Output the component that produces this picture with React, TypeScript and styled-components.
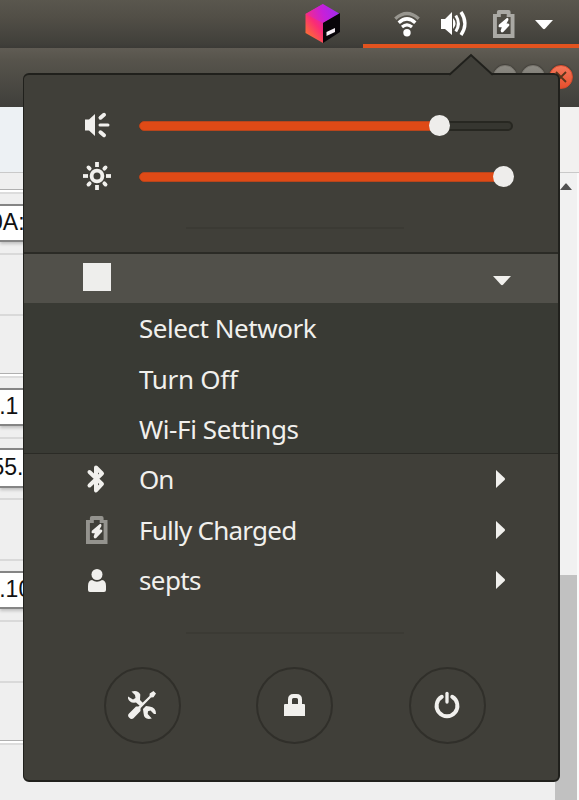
import React from "react";
import styled, { createGlobalStyle } from "styled-components";

const GlobalStyle = createGlobalStyle`
  * { box-sizing: border-box; }
  body { margin: 0; background: #efefef; overflow: hidden; }
  svg { display: block; flex: none; overflow: visible; }
`;

const Screen = styled.div`
  position: relative;
  width: 579px;
  height: 800px;
  overflow: hidden;
  display: grid;
  grid-template-rows: 48px 59px 1fr;
  background: #efefef;
`;

const TopBar = styled.header`
  display: flex;
  justify-content: flex-end;
  background: linear-gradient(#5a574e 0, #514e46 38%, #403f3a 92%, #3b3a36 100%);
`;

const AppIndicator = styled.div`
  width: 60px;
  padding: 4px 0 0 2px;
`;

const SystemTray = styled.div`
  width: 216px;
  display: grid;
  grid-template-columns: 31px 47px 52px 42px 1fr;
  border-bottom: 4px solid #e2531f;
`;

const TraySlot = styled.div<{ $col: number; $top: number }>`
  grid-column: ${(p) => p.$col};
  padding-top: ${(p) => p.$top}px;
`;

const TitleBar = styled.div`
  display: flex;
  justify-content: flex-end;
  gap: 4px;
  padding: 17px 6px 0 0;
  background: linear-gradient(#605c54 0, #57544c 20%, #45443f 80%, #403f3b 100%);
`;

const WindowButton = styled.div<{ $close?: boolean }>`
  width: 24px;
  height: 24px;
  border-radius: 50%;
  display: flex;
  align-items: center;
  justify-content: center;
  border: 1px solid ${(p) => (p.$close ? "#d84a2b" : "#77746d")};
  background: ${(p) => (p.$close ? "linear-gradient(#f4775a, #e64f2d)" : "linear-gradient(#8c8a83, #706e67)")};
  box-shadow: 0 -1px 1px rgba(40, 38, 34, 0.4);
`;

const WindowBody = styled.main`
  display: grid;
  grid-template-columns: 1fr 24px;
  grid-template-rows: 66px 1fr;
`;

const Toolbar = styled.div`
  grid-column: 1 / -1;
  border-bottom: 1px solid #c9c9c9;
  background: linear-gradient(90deg, #edf1f4 0, #edf1f4 24px, #f2f1f0 400px);
`;

const Form = styled.div`
  display: flex;
  flex-direction: column;
`;

const Gap = styled.div<{ $h: number }>`
  flex: none;
  height: ${(p) => p.$h}px;
`;

const Rule = styled.div`
  flex: none;
  height: 2px;
  background: #d9d9d9;
`;

const GroupEdge = styled.div`
  flex: none;
  height: 5px;
  border-top: 1px solid #b0b0b0;
  border-bottom: 2px solid #dcdcdc;
  background: #fff;
`;

const Field = styled.div<{ $h: number; $shift: number }>`
  flex: none;
  height: ${(p) => p.$h}px;
  width: 200px;
  border: solid #858585;
  border-width: 2px 0;
  background: #fff;
  box-shadow: 0 2px 3px rgba(0, 0, 0, 0.2);
  color: #111;
  font: 23px/${(p) => p.$h - 6}px "Liberation Sans", sans-serif;
  text-indent: ${(p) => p.$shift}px;
  white-space: nowrap;
`;

const Scrollbar = styled.div`
  display: flex;
  flex-direction: column;
  border-right: 2px solid #fafafa;
  background: #f1f1f1;
`;

const ScrollArrow = styled.div`
  padding: 10px 0 0 5px;
  height: 402px;
`;

const ScrollThumb = styled.div`
  flex: 1;
  background: #c1c1c1;
`;

const Menu = styled.section`
  position: absolute;
  left: 23px;
  top: 73px;
  width: 537px;
  height: 709px;
  border: 2px solid #20201c;
  border-left-width: 1px;
  border-radius: 6px;
  background: #403f39;
  color: #f1f0ed;
  font-family: "Noto Sans", "Open Sans", sans-serif;
`;

const MenuPointer = styled.div`
  position: absolute;
  left: 425px;
  top: -21px;
`;

const Sliders = styled.div`
  height: 177px;
  padding-top: 25px;
`;

const SliderRow = styled.div`
  height: 51px;
  display: grid;
  grid-template-columns: 115px 374px;
  align-items: center;
`;

const IconCell = styled.div<{ $left: number }>`
  padding-left: ${(p) => p.$left}px;
`;

const SliderIcon = styled(IconCell)`
  padding-bottom: 2px;
`;

const Track = styled.div`
  height: 10px;
  border: 2px solid #272721;
  border-radius: 5px;
  background: #363630;
  display: flex;
  align-items: center;
`;

const Fill = styled.div<{ $w: number }>`
  flex: none;
  width: ${(p) => p.$w}px;
  height: 10px;
  margin-left: -2px;
  border-radius: 5px;
  border: 1px solid #b8451c;
  background: #df4a16;
`;

const Knob = styled.div`
  flex: none;
  width: 21px;
  height: 21px;
  margin-left: -11px;
  border-radius: 50%;
  background: #eeedeb;
`;

const Separator = styled.div<{ $top: number }>`
  width: 218px;
  height: 2px;
  margin: ${(p) => p.$top}px 0 0 162px;
  background: #3b3a34;
`;

const NetworkHeader = styled.div`
  height: 51px;
  display: flex;
  align-items: center;
  padding: 0 47px 0 59px;
  justify-content: space-between;
  border-top: 2px solid #2b2b26;
  background: #51504a;
`;

const MissingIcon = styled.div`
  width: 28px;
  height: 28px;
  margin-top: -3px;
  background: #eeeeec;
`;

const ExpandArrow = styled.div`
  margin-top: 4px;
`;

const SubMenu = styled.div`
  height: 151px;
  border-bottom: 1px solid #2b2b26;
  background: #393a34;
`;

const MenuItem = styled.div<{ $h: number }>`
  height: ${(p) => p.$h}px;
  display: grid;
  grid-template-columns: 115px 357px auto;
  align-items: center;
`;

const Label = styled.span<{ $spacing: number }>`
  grid-column: 2;
  font-size: 26px;
  line-height: 36px;
  letter-spacing: ${(p) => p.$spacing}px;
  white-space: nowrap;
`;

const Actions = styled.div`
  display: flex;
  gap: 75.5px;
  padding: 33px 0 0 79.5px;
`;

const RoundButton = styled.button`
  width: 77px;
  height: 77px;
  padding: 0;
  display: flex;
  align-items: center;
  justify-content: center;
  border: 2px solid #302f2a;
  border-radius: 50%;
  background: none;
  color: inherit;
`;

const ink = "#f1f0ed";

const Battery = ({ body, bolt }: { body: string; bolt: string }) => (
  <svg width="21.5" height="28" viewBox="0 0 22 28" preserveAspectRatio="none">
    <path fill={body} fillRule="evenodd" d="M0 4H4V2Q4 0 6 0H16Q18 0 18 2V4H22V28H0ZM4 7V24H18V7H14V4H8V7Z" />
    <path fill={bolt} d="M14.5 7.8 6 14.8Q5 17 6.5 17.2H9L7.8 20.5Q8.2 23.3 10.5 22L16.5 15.8Q17.3 13.6 15.5 13.4H13.8L15.8 10Q16.2 8 14.5 7.8Z" />
  </svg>
);

const Wifi = () => (
  <svg width="26" height="25" viewBox="0 0 26 25" fill="none" strokeLinecap="butt">
    <path d="M1.3 6.7Q13-3.6 24.7 6.7" stroke="#98968f" strokeWidth="3.4" />
    <path d="M4.7 10.8Q13 3 21.3 10.8" stroke="#fff" strokeWidth="3.4" />
    <path d="M8 15Q13 10.8 18 15" stroke="#fff" strokeWidth="3.2" />
    <circle cx="13" cy="20.7" r="3.7" fill="#fff" />
  </svg>
);

const VolumeHigh = () => (
  <svg width="27" height="26" viewBox="0 0 27 26" fill="none" stroke="#fff">
    <path d="M0 8H4L11 1V24L4 18H0Z" fill="#fff" stroke="none" />
    <path d="M12 7Q17 12.5 12 18Z" fill="#fff" stroke="none" />
    <path d="M14.8 4.5Q20 12.5 14.8 20.5" strokeWidth="3" />
    <path d="M20 1Q27.8 12.5 20 24" strokeWidth="3.4" />
  </svg>
);

const Cube = () => (
  <svg width="36" height="40" viewBox="0 0 36 40">
    <defs>
      <linearGradient id="cubeLeft" x1="0.8" y1="0" x2="0.25" y2="1">
        <stop offset="0.1" stopColor="#d21fc8" />
        <stop offset="0.48" stopColor="#fa2b76" />
        <stop offset="1" stopColor="#fb7a2a" />
      </linearGradient>
      <linearGradient id="cubeTop" x1="0" y1="0.6" x2="1" y2="0.4">
        <stop offset="0" stopColor="#f52c85" />
        <stop offset="0.5" stopColor="#c820d8" />
        <stop offset="1" stopColor="#9b2cf2" />
      </linearGradient>
    </defs>
    <path d="M0.5 10 18 0V39L0.5 29Z" fill="url(#cubeLeft)" />
    <path d="M0.5 10 18 0 35 10 18 19Z" fill="url(#cubeTop)" />
    <path d="M18 19 35 9V28L18 39Z" fill="#080509" />
    <path d="M21.5 28 30 24V28L21.5 32Z" fill="#f4eef4" />
  </svg>
);

const Speaker = () => (
  <svg width="25" height="26" viewBox="0 0 25 26">
    <path d="M0 7.5H4L10 2V24L4 18.5H0Z" fill={ink} />
    <path d="M15.5 5.7 19 2.8M15.5 20.3 19 23.2" stroke={ink} strokeWidth="4" strokeLinecap="round" />
    <path d="M15 13H23" stroke={ink} strokeWidth="3" strokeLinecap="round" />
  </svg>
);

const Sun = () => (
  <svg width="28" height="28" viewBox="0 0 28 28" fill="none" stroke={ink}>
    <circle cx="14" cy="14" r="5.4" strokeWidth="3.8" />
    {[0, 90, 180, 270].map((a) => (
      <path key={a} d="M14 0V5" strokeWidth="3.8" transform={`rotate(${a} 14 14)`} />
    ))}
    {[45, 135, 225, 315].map((a) => (
      <path key={a} d="M14 1.9V3.6" strokeWidth="3.8" strokeLinecap="round" transform={`rotate(${a} 14 14)`} />
    ))}
  </svg>
);

const Bluetooth = () => (
  <svg width="17" height="28" viewBox="0 0 17 28">
    <path d="M1.5 7 14 19 8 25.5V2.5L14 8.5 1.5 20.5" fill="none" stroke={ink} strokeWidth="4" strokeLinejoin="round" strokeLinecap="round" />
  </svg>
);

const User = () => (
  <svg width="18" height="23" viewBox="0 0 18 23" fill={ink}>
    <circle cx="9" cy="5.5" r="5.5" />
    <path d="M0 17Q0 11.4 4 11Q9 14.6 14 11Q18 11.4 18 17V21Q18 23 16 23H2Q0 23 0 21Z" />
  </svg>
);

const Tools = () => (
  <svg width="30" height="30" viewBox="0 0 30 30" fill={ink}>
    <path d="M1 6.5 6 9.5 8.5 8 8 5 4.5 1.5Q11-.5 13.3 4.5L13 10 16 13 13 16 9 12.5Q2.5 13.5 1 8.5Z" />
    <path d="M16 19 19 16 22.5 16.5Q29 17 29 24L27 24 23.5 20.5 21 21.3 20.7 24 24.8 28.5Q17 30.5 16.5 23Z" />
    <path d="M11.2 17 22.5 6 22.7 3.5 26.5 1 29 3.5 26.5 7.2 24 7.5 13 18.8Z" />
    <path d="M9 16.5H12L13.5 18V21L6.5 28.2Q4.5 30 2.3 27.8Q0 25.5 2 23.5Z" />
  </svg>
);

const Lock = () => (
  <svg width="21" height="22" viewBox="0 0 21 22">
    <path d="M6 11V5.5Q6 2 9.5 2H12.5Q16 2 16 5.5V11" fill="none" stroke={ink} strokeWidth="4" />
    <path d="M1 10H20Q21 10 21 11V22H0V11Q0 10 1 10Z" fill={ink} />
  </svg>
);

const Power = () => (
  <svg width="26" height="28" viewBox="0 0 26 28" fill="none" stroke={ink} strokeLinecap="round">
    <path d="M7.8 5.8A10.4 10.4 0 1 0 18.2 5.8" strokeWidth="3.9" />
    <path d="M13 2.5V11" strokeWidth="3.3" />
  </svg>
);

const DownArrow = ({ fill = ink }: { fill?: string }) => (
  <svg width="18" height="10" viewBox="0 0 18 10">
    <path d="M0 0H18L10 8.8Q9 9.6 8 8.8Z" fill={fill} />
  </svg>
);

const RightArrow = () => (
  <svg width="10" height="18" viewBox="0 0 10 18">
    <path d="M0 0V18L8.6 10Q9.5 9 8.6 8Z" fill={ink} />
  </svg>
);

const statusItems = [
  { label: "On", spacing: -1, left: 63.5, icon: <Bluetooth /> },
  { label: "Fully Charged", spacing: -0.75, left: 62, icon: <Battery body="#94938e" bolt={ink} /> },
  { label: "septs", spacing: -0.6, left: 64, icon: <User /> },
];

const networkItems = [
  { label: "Select Network", spacing: -0.45 },
  { label: "Turn Off", spacing: -0.3 },
  { label: "Wi-Fi Settings", spacing: -0.4 },
];

export default function App() {
  return (
    <>
      <GlobalStyle />
      <Screen>
        <TopBar>
          <AppIndicator><Cube /></AppIndicator>
          <SystemTray>
            <TraySlot $col={2} $top={12}><Wifi /></TraySlot>
            <TraySlot $col={3} $top={11}><VolumeHigh /></TraySlot>
            <TraySlot $col={4} $top={10}><Battery body="#aaa9a4" bolt="#fff" /></TraySlot>
            <TraySlot $col={5} $top={20}><DownArrow fill="#fff" /></TraySlot>
          </SystemTray>
        </TopBar>
        <TitleBar>
          <WindowButton />
          <WindowButton />
          <WindowButton $close>
            <svg width="10" height="10" viewBox="0 0 10 10"><path d="M0 0 10 10M10 0 0 10" stroke="#59351c" strokeWidth="1.8" /></svg>
          </WindowButton>
        </TitleBar>
        <WindowBody>
          <Toolbar />
          <Form>
            <Gap $h={16} /><GroupEdge />
            <Gap $h={10} /><Field $h={38} $shift={-10}>0A:</Field>
            <Gap $h={11} /><Rule />
            <Gap $h={59} /><Rule />
            <Gap $h={57} /><GroupEdge />
            <Gap $h={10} /><Field $h={38} $shift={-0.8}>.1</Field>
            <Gap $h={11} /><Rule />
            <Gap $h={9} /><Field $h={40} $shift={-8.5}>55.</Field>
            <Gap $h={10} /><Rule />
            <Gap $h={59} /><Rule />
            <Gap $h={10} /><Field $h={38} $shift={-0.8}>.10</Field>
            <Gap $h={11} /><Rule />
            <Gap $h={59} /><Rule />
            <Gap $h={57} /><GroupEdge />
          </Form>
          <Scrollbar>
            <ScrollArrow>
              <svg width="12" height="7" viewBox="0 0 12 7"><path d="M0 7 5.5 0.5H6.5L12 7Z" fill="#505050" /></svg>
            </ScrollArrow>
            <ScrollThumb />
          </Scrollbar>
        </WindowBody>

        <Menu>
          <MenuPointer>
            <svg width="44" height="23" viewBox="0 0 44 23">
              <path d="M0 23V20.5H1L22 1 43 20.5H44V23Z" fill="#403f39" />
              <path d="M0 20.2H1L22 1 43 20.2H44" fill="none" stroke="#20201c" strokeWidth="2" />
            </svg>
          </MenuPointer>
          <Sliders>
            <SliderRow>
              <SliderIcon $left={61}><Speaker /></SliderIcon>
              <Track><Fill $w={301} /><Knob /></Track>
            </SliderRow>
            <SliderRow>
              <SliderIcon $left={59}><Sun /></SliderIcon>
              <Track><Fill $w={365} /><Knob /></Track>
            </SliderRow>
            <Separator $top={25} />
          </Sliders>
          <NetworkHeader>
            <MissingIcon />
            <ExpandArrow><DownArrow /></ExpandArrow>
          </NetworkHeader>
          <SubMenu>
            {networkItems.map((item) => (
              <MenuItem key={item.label} $h={50.4}>
                <Label $spacing={item.spacing}>{item.label}</Label>
              </MenuItem>
            ))}
          </SubMenu>
          {statusItems.map((item) => (
            <MenuItem key={item.label} $h={50.6}>
              <IconCell $left={item.left}>{item.icon}</IconCell>
              <Label $spacing={item.spacing}>{item.label}</Label>
              <RightArrow />
            </MenuItem>
          ))}
          <Separator $top={26} />
          <Actions>
            <RoundButton aria-label="Settings"><Tools /></RoundButton>
            <RoundButton aria-label="Lock"><Lock /></RoundButton>
            <RoundButton aria-label="Power"><Power /></RoundButton>
          </Actions>
        </Menu>
      </Screen>
    </>
  );
}
